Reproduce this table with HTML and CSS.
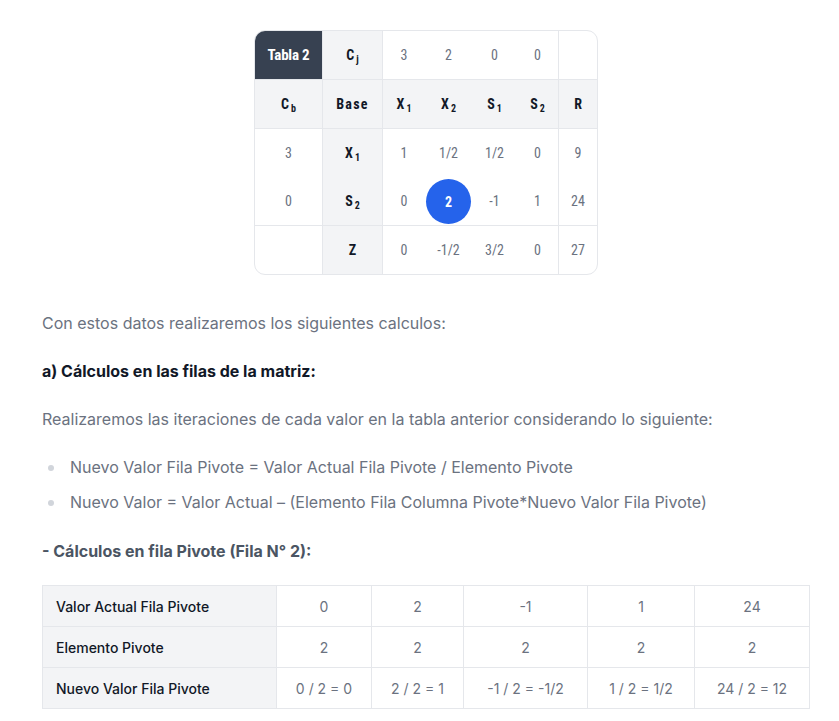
FILE: index.html
```html
<!DOCTYPE html>
<html lang="es">
<head>
<meta charset="utf-8">
<title>Tabla 2</title>
<link rel="stylesheet" href="styles.css">
</head>
<body>
<main class="page">
  <div class="simplex-wrap">
    <table class="simplex">
      <colgroup>
        <col class="w1"><col class="w2"><col class="w3"><col class="w4"><col class="w5"><col class="w6"><col class="w7">
      </colgroup>
      <tr class="line">
        <td class="dark vr">Tabla 2</td>
        <td class="gray head vr">C<sub>j</sub></td>
        <td class="num">3</td>
        <td class="num">2</td>
        <td class="num">0</td>
        <td class="num">0</td>
        <td class="vl"></td>
      </tr>
      <tr class="line gray">
        <td class="head vr">C<sub>b</sub></td>
        <td class="head wide vr">Base</td>
        <td class="head">X<sub>1</sub></td>
        <td class="head">X<sub>2</sub></td>
        <td class="head">S<sub>1</sub></td>
        <td class="head">S<sub>2</sub></td>
        <td class="head vl">R</td>
      </tr>
      <tr>
        <td class="num vr">3</td>
        <td class="gray head vr">X<sub>1</sub></td>
        <td class="num">1</td>
        <td class="num">1/2</td>
        <td class="num">1/2</td>
        <td class="num">0</td>
        <td class="num vl">9</td>
      </tr>
      <tr class="line">
        <td class="num vr">0</td>
        <td class="gray head vr">S<sub>2</sub></td>
        <td class="num">0</td>
        <td class="num"><span class="pivot">2</span></td>
        <td class="num">-1</td>
        <td class="num">1</td>
        <td class="num vl">24</td>
      </tr>
      <tr>
        <td class="vr"></td>
        <td class="gray head vr">Z</td>
        <td class="num">0</td>
        <td class="num">-1/2</td>
        <td class="num">3/2</td>
        <td class="num">0</td>
        <td class="num vl">27</td>
      </tr>
    </table>
  </div>

  <p class="text first">Con estos datos realizaremos los siguientes calculos:</p>
  <p class="subtitle">a) Cálculos en las filas de la matriz:</p>
  <p class="text">Realizaremos las iteraciones de cada valor en la tabla anterior considerando lo siguiente:</p>
  <ul class="bullets">
    <li>Nuevo Valor Fila Pivote = Valor Actual Fila Pivote / Elemento Pivote</li>
    <li>Nuevo Valor = Valor Actual – (Elemento Fila Columna Pivote*Nuevo Valor Fila Pivote)</li>
  </ul>
  <p class="subtitle muted">- Cálculos en fila Pivote (Fila N° 2):</p>

  <table class="calc">
    <colgroup>
      <col class="c1"><col class="c2"><col class="c3"><col class="c4"><col class="c5"><col class="c6">
    </colgroup>
    <tr>
      <th>Valor Actual Fila Pivote</th>
      <td>0</td><td>2</td><td>-1</td><td>1</td><td>24</td>
    </tr>
    <tr>
      <th>Elemento Pivote</th>
      <td>2</td><td>2</td><td>2</td><td>2</td><td>2</td>
    </tr>
    <tr>
      <th>Nuevo Valor Fila Pivote</th>
      <td>0 / 2 = 0</td><td>2 / 2 = 1</td><td>-1 / 2 = -1/2</td><td>1 / 2 = 1/2</td><td>24 / 2 = 12</td>
    </tr>
  </table>
</main>
</body>
</html>
```

FILE: styles.css
```css
* { box-sizing: border-box; }
html, body { margin: 0; padding: 0; background: #fff; }
body {
  font-family: "Inter", "Liberation Sans", sans-serif;
  color: #6b7280;
}
.page {
  width: 767px;
  margin-left: 42px;
  padding-top: 30px;
}
.simplex-wrap {
  display: flex;
  justify-content: center;
  padding-left: 1px;
}
.simplex {
  border-collapse: separate;
  border-spacing: 0;
  table-layout: fixed;
  width: 344px;
  border: 1px solid #e5e7eb;
  border-radius: 11px;
  overflow: hidden;
  font-family: "Roboto Condensed", "Roboto", "DejaVu Sans Condensed", sans-serif;
  font-stretch: condensed;
  font-size: 14px;
}
.simplex .w1 { width: 68px; }
.simplex .w2 { width: 60px; }
.simplex .w3 { width: 42px; }
.simplex .w4 { width: 47px; }
.simplex .w5 { width: 45px; }
.simplex .w6 { width: 41px; }
.simplex .w7 { width: 39px; }
.simplex td {
  box-sizing: content-box;
  height: 48px;
  padding: 0;
  text-align: center;
  vertical-align: middle;
  color: #6b7280;
}
.simplex tr.line td { border-bottom: 1px solid #e5e7eb; }
.simplex td.vr { border-right: 1px solid #e5e7eb; }
.simplex td.vl { border-left: 1px solid #e5e7eb; }
.simplex .gray, .simplex tr.gray td { background: #f3f4f6; }
.simplex td.dark {
  background: #374151;
  color: #fff;
  font-weight: 700;
  font-size: 15px;
  letter-spacing: -0.2px;
}
.simplex td.head {
  color: #111827;
  font-weight: 700;
}
.simplex td.wide { letter-spacing: 1.3px; }
.simplex sub {
  font-size: 10px;
  vertical-align: -3px;
  line-height: 0;
  margin-left: 2px;
}
.pivot {
  display: inline-flex;
  align-items: center;
  justify-content: center;
  width: 45px;
  height: 45px;
  border-radius: 50%;
  background: #2563eb;
  color: #fff;
  font-weight: 700;
  vertical-align: middle;
  margin-top: 1px;
}

.text {
  margin: 24px 0 0;
  font-size: 16px;
  line-height: 24px;
  color: #6b7280;
}
.text.first { margin-top: 36px; }
.subtitle {
  margin: 24px 0 0;
  font-size: 16px;
  line-height: 24px;
  font-weight: 700;
  color: #111827;
}
.subtitle.muted { color: #4b5563; margin-top: 25px; }
.bullets {
  margin: 24px 0 0;
  padding: 0 0 0 28px;
  font-size: 16px;
  line-height: 24px;
  color: #6b7280;
  list-style: none;
}
.bullets li {
  position: relative;
  margin-bottom: 11px;
}
.bullets li::before {
  content: "";
  position: absolute;
  left: -22px;
  top: 10px;
  width: 6px;
  height: 6px;
  border-radius: 50%;
  background: #d1d5db;
}

.calc {
  margin-top: 22px;
  width: 767px;
  border-collapse: collapse;
  table-layout: fixed;
  font-size: 14px;
}
.calc .c1 { width: 234px; }
.calc .c2 { width: 95px; }
.calc .c3 { width: 92px; }
.calc .c4 { width: 124px; }
.calc .c5 { width: 107px; }
.calc .c6 { width: 115px; }
.calc th, .calc td {
  border: 1px solid #e5e7eb;
  height: 41px;
  padding: 0;
  vertical-align: middle;
}
.calc th {
  background: #f3f4f6;
  color: #111827;
  font-weight: 500;
  text-align: left;
  padding-left: 13px;
}
.calc td {
  text-align: center;
  color: #6b7280;
}
```
